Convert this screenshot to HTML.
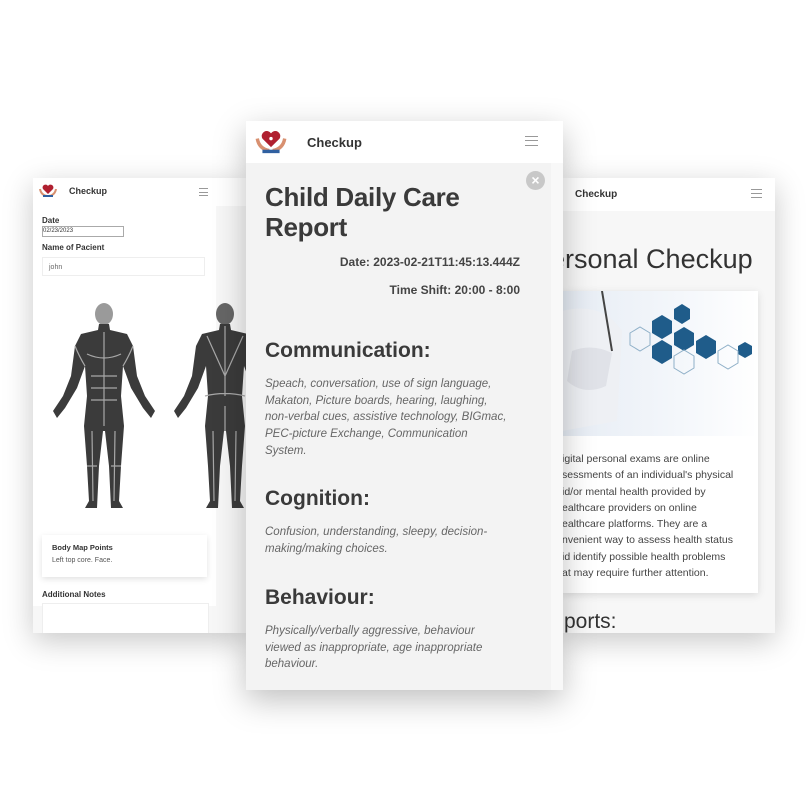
<!DOCTYPE html>
<html><head><meta charset="utf-8"><style>
body{margin:0;width:811px;height:811px;background:#fff;position:relative;overflow:hidden;font-family:"Liberation Sans","DejaVu Sans",sans-serif;}
.card{position:absolute;background:#fff;box-shadow:0 8px 28px rgba(0,0,0,.22);overflow:hidden;}
.hdr{position:absolute;left:0;right:0;top:0;background:#fff;}
.ham{position:absolute;width:12px;height:8px;border-top:1px solid #999;border-bottom:1px solid #999;}
.ham:after{content:"";position:absolute;left:0;right:0;top:3px;border-top:1px solid #999;}
.b{font-weight:bold;color:#333;}
</style></head><body>

<!-- left card -->
<div class="card" style="left:33px;top:178px;width:216px;height:455px;background:#f7f7f7;">
 <div class="hdr" style="height:28px;">
  <svg style="position:absolute;left:6px;top:6px" width="18" height="14" viewBox="0 0 18 14"><path d="M9 10 L4 5 A2.5 2.5 0 0 1 9 2 A2.5 2.5 0 0 1 14 5Z" fill="#b02030"/><path d="M1 5 Q2 11 8 12 M17 5 Q16 11 10 12" stroke="#d89070" stroke-width="2" fill="none"/><rect x="4" y="11" width="10" height="2" fill="#3060a0"/></svg>
  <div class="b" style="position:absolute;left:36px;top:8px;font-size:9px;">Checkup</div>
  <div class="ham" style="left:166px;top:10px;width:9px;height:6px"></div>
 </div>
 <div style="position:absolute;left:0;top:28px;width:183px;height:400px;background:#fff"></div>
 <div class="b" style="position:absolute;left:9px;top:38px;font-size:8px;">Date</div>
 <div style="position:absolute;left:9px;top:48px;width:80px;height:9px;border:1px solid #aaa;font-size:6px;color:#333;line-height:9px;">02/23/2023</div>
 <div class="b" style="position:absolute;left:9px;top:65px;font-size:8px;">Name of Pacient</div>
 <div style="position:absolute;left:9px;top:79px;width:163px;height:19px;border:1px solid #eee;font-size:7px;color:#666;line-height:19px;padding-left:6px;box-sizing:border-box">john</div>
 <svg style="position:absolute;left:14px;top:118px" width="202" height="230" viewBox="0 0 202 230">
  <defs>
   <path id="fig" d="M52 28 L62 28 L63 34 L80 38 L86 50 L90 80 L98 100 L108 115 L104 122 L96 112 L84 92 L76 70 L74 100 L77 130 L74 170 L72 205 L76 212 L64 212 L62 170 L58 135 L56 135 L52 170 L50 212 L38 212 L42 205 L40 170 L37 130 L40 100 L38 70 L30 92 L18 112 L10 122 L6 115 L16 100 L24 80 L28 50 L34 38 L51 34Z"/>
  </defs>
  <ellipse cx="57" cy="18" rx="9" ry="11" fill="#9a9a9a"/>
  <use href="#fig" fill="#3b3b3b"/>
  <g stroke="#a8a8a8" stroke-width="1.2" fill="none">
   <path d="M57 36 V130 M40 58 Q57 66 74 58 M44 80 H70 M44 92 H70 M44 104 H70 M28 50 Q32 60 38 70 M86 50 Q82 60 76 70 M45 135 L46 205 M68 135 L67 205 M40 170 H50 M64 170 H74"/>
  </g>
  <ellipse cx="178" cy="18" rx="9" ry="11" fill="#666"/>
  <use href="#fig" fill="#3b3b3b" transform="translate(121 0)"/>
  <g stroke="#a8a8a8" stroke-width="1.2" fill="none">
   <path d="M178 30 V100 M160 40 L178 80 L196 40 M158 100 Q178 95 198 100 M178 110 V135 M166 135 L167 205 M189 135 L188 205"/>
  </g>
 </svg>
 <div style="position:absolute;left:9px;top:357px;width:165px;height:42px;background:#fff;box-shadow:0 2px 6px rgba(0,0,0,.12)">
  <div class="b" style="position:absolute;left:10px;top:8px;font-size:7.5px;">Body Map Points</div>
  <div style="position:absolute;left:10px;top:22px;font-size:7px;color:#555">Left top core. Face.</div>
 </div>
 <div class="b" style="position:absolute;left:9px;top:412px;font-size:8px;">Additional Notes</div>
 <div style="position:absolute;left:9px;top:425px;width:165px;height:40px;background:#fff;border:1px solid #eee"></div>
</div>

<!-- right card -->
<div class="card" style="left:562px;top:178px;width:213px;height:455px;background:#f7f7f7;">
 <div class="hdr" style="height:33px;">
  <div class="b" style="position:absolute;left:13px;top:11px;font-size:10px;">Checkup</div>
  <div class="ham" style="left:189px;top:11px;width:11px;height:7px"></div>
 </div>
 <div style="position:absolute;left:0;top:66px;font-size:27px;color:#333;white-space:nowrap;margin-left:-12px;">ersonal Checkup</div>
 <div style="position:absolute;left:0;top:113px;width:196px;height:302px;background:#fff;box-shadow:0 2px 8px rgba(0,0,0,.12)">
  <div style="position:absolute;left:0;top:0;width:196px;height:145px;background:linear-gradient(90deg,#e6ecf4,#f4f7fb 60%,#fff)">
   <svg width="196" height="145" viewBox="0 0 196 145">
    <path d="M0 20 Q40 10 60 40 L55 130 L0 140Z" fill="#eef0f4"/>
    <path d="M10 60 Q30 52 50 62 L44 95 Q22 105 5 90Z" fill="#e0e2e8"/>
    <path d="M40 0 L50 60" stroke="#444" stroke-width="2"/>
    <g fill="#1f5c8a"><polygon points="90,30 100,24 110,30 110,42 100,48 90,42"/><polygon points="90,55 100,49 110,55 110,67 100,73 90,67"/><polygon points="112,42 122,36 132,42 132,54 122,60 112,54"/><polygon points="134,50 144,44 154,50 154,62 144,68 134,62"/><polygon points="112,18 120,13 128,18 128,28 120,33 112,28"/><polygon points="176,55 183,51 190,55 190,63 183,67 176,63"/></g>
    <g fill="none" stroke="#8fb0c8"><polygon points="68,42 78,36 88,42 88,54 78,60 68,54"/><polygon points="112,65 122,59 132,65 132,77 122,83 112,77"/><polygon points="156,60 166,54 176,60 176,72 166,78 156,72"/></g>
   </svg>
  </div>
  <div style="position:absolute;left:0;top:160px;width:185px;font-size:10.5px;line-height:16.3px;color:#444;white-space:nowrap;overflow:hidden">
   igital personal exams are online<br>sessments of an individual's physical<br>id/or mental health provided by<br>ealthcare providers on online<br>ealthcare platforms. They are a<br>nvenient way to assess health status<br>id identify possible health problems<br>at may require further attention.
  </div>
 </div>
 <div style="position:absolute;left:2px;top:432px;font-size:21px;color:#333">ports:</div>
</div>

<!-- middle card -->
<div class="card" style="left:246px;top:121px;width:317px;height:569px;background:#f8f8f8;box-shadow:0 10px 30px rgba(0,0,0,.25)">
 <div class="hdr" style="height:42px;">
  <svg style="position:absolute;left:9px;top:9px" width="32" height="24" viewBox="0 0 18 14"><path d="M9 10 L4 5 A2.5 2.5 0 0 1 9 2 A2.5 2.5 0 0 1 14 5Z" fill="#b02030"/><circle cx="9" cy="5" r="1" fill="#fff"/><path d="M1 5 Q2 11 8 12 M17 5 Q16 11 10 12" stroke="#d89070" stroke-width="2" fill="none"/><rect x="4" y="11.5" width="10" height="2" fill="#3060a0"/></svg>
  <div class="b" style="position:absolute;left:61px;top:14px;font-size:13px;">Checkup</div>
  <div class="ham" style="left:279px;top:15px;width:13px;height:8px"></div>
 </div>
 <div style="position:absolute;left:0;top:42px;width:305px;height:527px;background:#f3f3f3"></div>
 <div style="position:absolute;left:280px;top:50px;width:19px;height:19px;border-radius:50%;background:#c8c8c8;color:#fff;font-size:14px;font-weight:bold;text-align:center;line-height:19px">×</div>
 <div style="position:absolute;left:19px;top:61px;font-size:26px;line-height:30px;color:#3a3a3a;font-weight:bold;letter-spacing:-.3px">Child Daily Care<br>Report</div>
 <div style="position:absolute;right:43px;top:134px;font-size:12px;color:#444;font-weight:bold">Date: 2023-02-21T11:45:13.444Z</div>
 <div style="position:absolute;right:43px;top:162px;font-size:12px;color:#444;font-weight:bold">Time Shift: 20:00 - 8:00</div>
 <div style="position:absolute;left:19px;top:218px;font-size:21px;color:#3a3a3a;font-weight:bold">Communication:</div>
 <div style="position:absolute;left:19px;top:255px;width:246px;font-size:11.5px;line-height:16.7px;color:#666;font-style:italic">Speach, conversation, use of sign language, Makaton, Picture boards, hearing, laughing, non-verbal cues, assistive technology, BIGmac, PEC-picture Exchange, Communication System.</div>
 <div style="position:absolute;left:19px;top:366px;font-size:21px;color:#3a3a3a;font-weight:bold">Cognition:</div>
 <div style="position:absolute;left:19px;top:403px;width:246px;font-size:11.5px;line-height:16.7px;color:#666;font-style:italic">Confusion, understanding, sleepy, decision-making/making choices.</div>
 <div style="position:absolute;left:19px;top:465px;font-size:21px;color:#3a3a3a;font-weight:bold">Behaviour:</div>
 <div style="position:absolute;left:19px;top:502px;width:246px;font-size:11.5px;line-height:16.7px;color:#666;font-style:italic">Physically/verbally aggressive, behaviour viewed as inappropriate, age inappropriate behaviour.</div>
</div>
</body></html>
